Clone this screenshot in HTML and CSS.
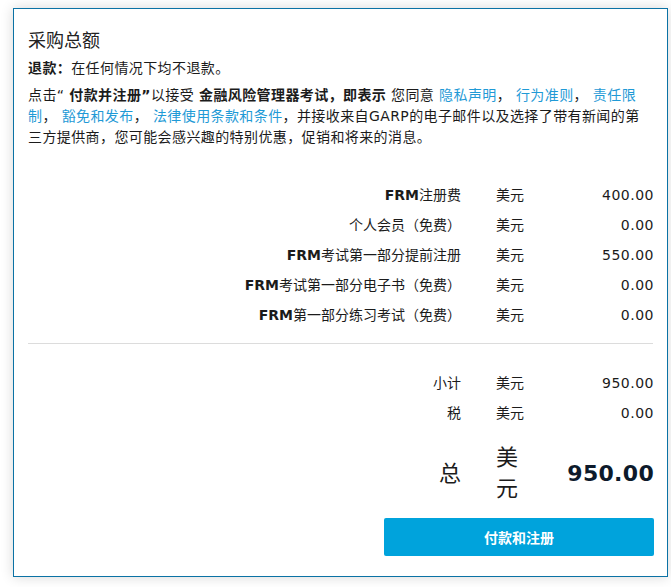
FILE: index.html
```
<!DOCTYPE html>
<html lang="zh-CN">
<head>
<meta charset="utf-8">
<title>采购总额</title>
<link rel="stylesheet" href="styles.css">
</head>
<body>
<div class="card">
  <h2 class="title">采购总额</h2>
  <p class="refund"><b>退款：</b>在任何情况下均不退款。</p>
  <p class="terms">点击“ <b>付款并注册”</b>以接受 <b>金融风险管理器考试，即表示</b> 您同意 <a href="#">隐私声明</a>， <a href="#">行为准则</a>， <a href="#">责任限制</a>， <a href="#">豁免和发布</a>， <a href="#">法律使用条款和条件</a>，并接收来自GARP的电子邮件以及选择了带有新闻的第三方提供商，您可能会感兴趣的特别优惠，促销和将来的消息。</p>

  <div class="lines">
    <div class="label"><b>FRM</b>注册费</div><div class="cur">美元</div><div class="amt">400.00</div>
    <div class="label">个人会员（免费）</div><div class="cur">美元</div><div class="amt">0.00</div>
    <div class="label"><b>FRM</b>考试第一部分提前注册</div><div class="cur">美元</div><div class="amt">550.00</div>
    <div class="label"><b>FRM</b>考试第一部分电子书（免费）</div><div class="cur">美元</div><div class="amt">0.00</div>
    <div class="label"><b>FRM</b>第一部分练习考试（免费）</div><div class="cur">美元</div><div class="amt">0.00</div>
  </div>

  <hr class="divider">

  <div class="lines sums">
    <div class="label">小计</div><div class="cur">美元</div><div class="amt">950.00</div>
    <div class="label">税</div><div class="cur">美元</div><div class="amt">0.00</div>
  </div>

  <div class="lines total">
    <div class="label">总</div><div class="cur">美元</div><div class="amt">950.00</div>
  </div>

  <div class="actions">
    <button class="pay" type="button">付款和注册</button>
  </div>
</div>
</body>
</html>
```
FILE: styles.css
```
html, body {
  margin: 0;
  padding: 0;
  background: #ffffff;
}
body {
  padding: 8px 4px 10px 13px;
  font-family: "DejaVu Sans", "Noto Sans CJK SC", sans-serif;
  color: #1b1b1b;
}
.card {
  width: 625px;
  border: 1px solid #0b72a5;
  background: #fff;
  box-shadow: 0 0 12px rgba(0, 0, 0, 0.16);
  padding: 18px 14px 20px 14px;
}
.title {
  margin: 0;
  font-size: 18px;
  line-height: 24px;
  font-weight: normal;
  font-family: "Noto Sans CJK SC", sans-serif;
  color: #222;
}
.refund {
  margin: 7px 0 0 0;
  font-size: 14px;
  line-height: 20px;
  letter-spacing: 0.4px;
}
.terms {
  margin: 7px 0 0 0;
  font-size: 14px;
  line-height: 21px;
  letter-spacing: 0.4px;
}
.terms a {
  color: #1f9ad6;
  text-decoration: none;
}
b {
  font-weight: bold;
}
.lines {
  display: grid;
  grid-template-columns: 1fr 28px 94px;
  column-gap: 35px;
  font-size: 14px;
  line-height: 30px;
}
.terms + .lines {
  margin-top: 32px;
}
.label {
  text-align: right;
  white-space: nowrap;
}
.cur {
  white-space: nowrap;
}
.amt {
  text-align: right;
  letter-spacing: 0.5px;
  margin-right: -1px;
}
.divider {
  margin: 13px 0 0 0;
  border: 0;
  border-top: 1px solid #dcdcdc;
  height: 0;
}
.sums {
  margin-top: 24px;
}
.total {
  margin-top: 14px;
  font-size: 22px;
  line-height: 31px;
  align-items: center;
}
.total .cur {
  white-space: normal;
  word-break: break-all;
}
.total .amt {
  font-weight: 600;
  color: #0d1a2b;
  letter-spacing: 0.3px;
}
.actions {
  display: flex;
  justify-content: flex-end;
  margin-top: 14px;
  margin-right: -1px;
}
.pay {
  width: 270px;
  height: 38px;
  border: 0;
  border-radius: 2px;
  background: #00a3dc;
  color: #fff;
  font-family: "Noto Sans CJK SC", sans-serif;
  font-size: 14px;
  font-weight: bold;
}
```
